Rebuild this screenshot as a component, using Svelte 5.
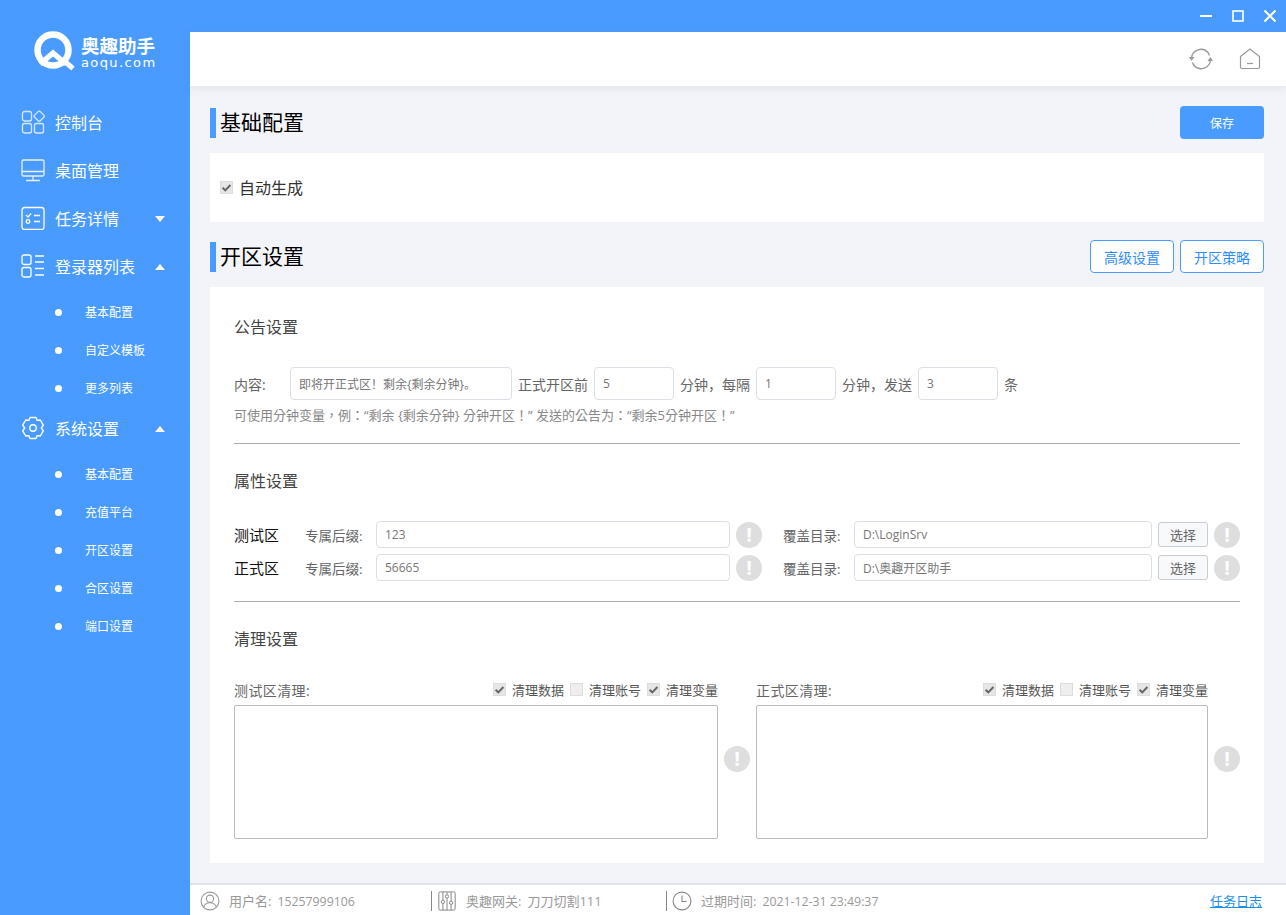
<script>
  const subA = ['基本配置', '自定义模板', '更多列表'];
  const subB = ['基本配置', '充值平台', '开区设置', '合区设置', '端口设置'];
  const attrs = [
    { name: '测试区', suffix: '123', dir: 'D:\\LoginSrv' },
    { name: '正式区', suffix: '56665', dir: 'D:\\奥趣开区助手' }
  ];
  const cleans = [
    { label: '测试区清理:', gap: 'a' },
    { label: '正式区清理:', gap: 'b' }
  ];
</script>

{#snippet warn()}
  <span class="warn">!</span>
{/snippet}

{#snippet check(on, text)}
  <span class="check">
    <span class="box" class:on>
      {#if on}
        <svg viewBox="0 0 14 14"><path d="M2.8 7.2l2.9 2.9 5.5-5.8" fill="none" stroke="#666" stroke-width="2.2"/></svg>
      {/if}
    </span>
    {text}
  </span>
{/snippet}

<div class="app">
  <aside class="side">
    <div class="logo">
      <svg class="logo-mark" viewBox="0 0 42 42">
        <circle cx="20" cy="19" r="15.5" fill="none" stroke="#fff" stroke-width="6.500"/>
        <path d="M7 33L20 22l13 11" fill="none" stroke="#fff" stroke-width="5.500"/>
        <path d="M30 29l10 8.500" stroke="#fff" stroke-width="5"/>
      </svg>
      <div class="logo-text">
        <div class="logo-cn">奥趣助手</div>
        <div class="logo-en">aoqu.com</div>
      </div>
    </div>

    <nav class="nav">
      <div class="item">
        <svg class="ico" viewBox="0 0 24 24"><g fill="none" stroke="#d8e9ff" stroke-width="1.3"><rect x="1.5" y="1.5" width="9" height="9.5" rx="2"/><rect x="14.2" y="2.2" width="8" height="8" rx="1.5" transform="rotate(45 18.2 6.2)"/><rect x="1.5" y="13.5" width="9" height="9.5" rx="2"/><rect x="13.5" y="13.5" width="9" height="9.5" rx="2"/></g></svg>
        <span>控制台</span>
      </div>
      <div class="item">
        <svg class="ico" viewBox="0 0 24 24"><g fill="none" stroke="#e6f1ff" stroke-width="1.3"><rect x="1" y="2" width="22" height="16" rx="1.5"/><path d="M1 13.5h22M12 18v4M5 22.5h14"/></g></svg>
        <span>桌面管理</span>
      </div>
      <div class="item">
        <svg class="ico" viewBox="0 0 24 24"><g fill="none" stroke="#fff" stroke-width="1.3"><rect x="1" y="1.5" width="22" height="22" rx="2.5"/><path d="M5 9l2 2 3-3.5M13 9.5h6M13 15.5h6"/><circle cx="7" cy="15.5" r="1.8"/></g></svg>
        <span>任务详情</span>
        <i class="caret down"></i>
      </div>
      <div class="item">
        <svg class="ico" viewBox="0 0 24 24"><g fill="none" stroke="#fff" stroke-width="1.3"><rect x="1" y="1" width="9" height="9.5" rx="2"/><rect x="1" y="13.5" width="9" height="9.5" rx="2"/><path d="M14 2h9M14 8h9M14 14.5h9M14 21h9"/></g></svg>
        <span>登录器列表</span>
        <i class="caret up"></i>
      </div>
      <div class="subs">
        {#each subA as s}
          <div class="sub"><b></b>{s}</div>
        {/each}
      </div>
      <div class="item">
        <svg class="ico" viewBox="0 0 24 24"><g fill="none" stroke="#fff" stroke-width="1.4"><path d="M9 1.5h6l1.2 2.9 3.100-.4 3 5.100-1.900 2.900 1.900 2.900-3 5.100-3.100-.4L15 22.500H9l-1.200-2.900-3.100.4-3-5.100 1.900-2.900-1.900-2.900 3-5.100 3.100.4z" stroke-linejoin="round"/><circle cx="12" cy="12" r="3.200"/></g></svg>
        <span>系统设置</span>
        <i class="caret up"></i>
      </div>
      <div class="subs">
        {#each subB as s}
          <div class="sub"><b></b>{s}</div>
        {/each}
      </div>
    </nav>
  </aside>

  <div class="main">
    <div class="titlebar">
      <svg viewBox="0 0 14 14"><path d="M1 7h12" stroke="#fff" stroke-width="2"/></svg>
      <svg viewBox="0 0 14 14"><rect x="2" y="2" width="10" height="10" fill="none" stroke="#fff" stroke-width="1.6"/></svg>
      <svg viewBox="0 0 14 14"><path d="M1.500 1.500l11 11M12.500 1.500l-11 11" stroke="#fff" stroke-width="2"/></svg>
    </div>
    <header class="top">
      <svg class="refresh" viewBox="0 0 24 24"><g fill="none" stroke="#9a9a9a" stroke-width="1.400"><path d="M2.500 11a9.500 9.500 0 0 1 16.500-5.500l1.500 3"/><path d="M21.500 13a9.500 9.500 0 0 1-16.500 5.500l-1.500-3"/></g><path d="M0 10l2.600 4 2.900-4zM18.500 14l2.900-4 2.600 4z" fill="#9a9a9a"/></svg>
      <svg class="home" viewBox="0 0 22 22"><path d="M1.500 8.500L11 1l9.500 7.500v10.500a1.500 1.500 0 0 1-1.500 1.500H3a1.500 1.500 0 0 1-1.500-1.500z" fill="none" stroke="#9a9a9a" stroke-width="1.200"/><path d="M8 15.500h6" stroke="#9a9a9a" stroke-width="1.200"/></svg>
    </header>

    <main class="content">
      <div class="head first">
        <h2>基础配置</h2>
        <button class="save">保存</button>
      </div>
      <section class="card auto">
        {@render check(true, '')}
        <span class="auto-label">自动生成</span>
      </section>

      <div class="head">
        <h2>开区设置</h2>
        <div class="head-btns">
          <button class="outline">高级设置</button>
          <button class="outline">开区策略</button>
        </div>
      </div>
      <section class="card form">
        <h3>公告设置</h3>
        <div class="notice">
          <span class="lbl-content">内容:</span>
          <div class="field f-text">即将开正式区！剩余{'{'}剩余分钟{'}'}。</div>
          <span>正式开区前</span>
          <div class="field f-num">5</div>
          <span>分钟，每隔</span>
          <div class="field f-num">1</div>
          <span>分钟，发送</span>
          <div class="field f-num">3</div>
          <span>条</span>
        </div>
        <p class="hint">可使用分钟变量，例：“剩余 {'{'}剩余分钟{'}'} 分钟开区！” 发送的公告为：“剩余5分钟开区！”</p>
        <hr class="rule" />

        <h3>属性设置</h3>
        <div class="attrs">
          {#each attrs as a}
            <div class="attr">
              <span class="zone">{a.name}</span>
              <span class="lbl-suffix">专属后缀:</span>
              <div class="field f-suffix">{a.suffix}</div>
              {@render warn()}
              <span class="lbl-dir">覆盖目录:</span>
              <div class="field f-dir">{a.dir}</div>
              <button class="pick">选择</button>
              {@render warn()}
            </div>
          {/each}
        </div>
        <hr class="rule second" />

        <h3>清理设置</h3>
        <div class="cleans">
          {#each cleans as c}
            <div class="clean">
              <div class="clean-col">
                <div class="clean-head">
                  <span class="clean-label">{c.label}</span>
                  {@render check(true, '清理数据')}
                  {@render check(false, '清理账号')}
                  {@render check(true, '清理变量')}
                </div>
                <div class="area"></div>
              </div>
              {@render warn()}
            </div>
          {/each}
        </div>
      </section>
    </main>

    <footer class="foot">
      <div class="stat s1">
        <svg viewBox="0 0 22 22"><g fill="none" stroke="#999" stroke-width="1.200"><circle cx="11" cy="11" r="9.800"/><circle cx="11" cy="8.500" r="4"/><path d="M4 18c1-3.500 3.500-5 7-5s6 1.500 7 5"/></g></svg>
        <span>用户名:<span class="val">15257999106</span></span>
      </div>
      <div class="stat s2">
        <svg viewBox="0 0 20 22"><g fill="none" stroke="#888" stroke-width="1.100"><rect x="1" y="1" width="18" height="20" rx="1.500"/><path d="M5.500 1v9M5.500 14v7M10 1v3M10 8v13M14.500 1v10M14.500 15v6"/><circle cx="5.500" cy="12" r="1.800"/><circle cx="10" cy="6" r="1.800"/><circle cx="14.500" cy="13" r="1.800"/></g></svg>
        <span>奥趣网关:<span class="val">刀刀切割111</span></span>
      </div>
      <div class="stat s3">
        <svg viewBox="0 0 22 22"><g fill="none" stroke="#888" stroke-width="1.200"><circle cx="11" cy="11" r="9.800"/><path d="M11 5v6.500h5"/></g></svg>
        <span>过期时间:<span class="val">2021-12-31 23:49:37</span></span>
      </div>
      <a class="log" href="#log">任务日志</a>
    </footer>
  </div>
</div>

<style>
  :global(body) {
    margin: 0;
    background: #4a9bff;
  }
  .app {
    display: flex;
    width: 1286px;
    height: 915px;
    overflow: hidden;
    font-family: "Open Sans", "Noto Sans CJK SC", sans-serif;
    font-size: 13px;
    color: #666;
  }
  .side {
    width: 190px;
    flex: none;
    background: #4a9bff;
    color: #fff;
  }
  .logo {
    height: 98px;
    box-sizing: border-box;
    padding: 31px 0 0 33px;
    display: flex;
    gap: 6px;
  }
  .logo-mark {
    width: 42px;
    height: 42px;
    flex: none;
  }
  .logo-text {
    padding-top: 6px;
  }
  .logo-cn {
    font-size: 18.500px;
    font-weight: 700;
    height: 18px;
    line-height: 18px;
    white-space: nowrap;
  }
  .logo-en {
    font-family: "DejaVu Sans", sans-serif;
    font-size: 13px;
    line-height: 13px;
    letter-spacing: 1.400px;
    margin-top: 1px;
  }
  .item {
    height: 48px;
    display: flex;
    align-items: center;
    padding-left: 21px;
    font-size: 16px;
    position: relative;
  }
  .ico {
    width: 24px;
    height: 24px;
    margin-right: 10px;
    flex: none;
  }
  .caret {
    position: absolute;
    left: 155px;
    width: 0;
    height: 0;
    margin-top: 2px;
    border-left: 5px solid transparent;
    border-right: 5px solid transparent;
  }
  .caret.down {
    border-top: 6px solid #fff;
  }
  .caret.up {
    border-bottom: 6px solid #fff;
  }
  .subs {
    margin: 3px 0 -3px;
  }
  .sub {
    height: 38px;
    display: flex;
    align-items: center;
    padding-left: 55px;
    font-size: 12px;
  }
  .sub b {
    width: 7px;
    height: 7px;
    border-radius: 50%;
    background: #fff;
    margin-right: 23px;
  }
  .main {
    flex: 1;
    min-width: 0;
    display: flex;
    flex-direction: column;
  }
  .titlebar {
    height: 32px;
    flex: none;
    background: #4a9bff;
    display: flex;
    justify-content: flex-end;
    align-items: center;
    gap: 18px;
    padding-right: 9px;
  }
  .titlebar svg {
    width: 14px;
    height: 14px;
  }
  .top {
    height: 54px;
    flex: none;
    background: #fff;
    display: flex;
    justify-content: flex-end;
    align-items: center;
    gap: 26px;
    padding-right: 25px;
    box-shadow: 0 2px 8px rgba(120, 130, 160, 0.16);
    position: relative;
    box-sizing: border-box;
  }
  .refresh {
    width: 24px;
    height: 24px;
  }
  .home {
    width: 22px;
    height: 22px;
  }
  .content {
    flex: 1;
    min-height: 0;
    background: #f3f4fa;
    padding: 0 22px 0 20px;
  }
  .head {
    height: 33px;
    margin-top: 18px;
    margin-bottom: 14px;
    display: flex;
    align-items: center;
    justify-content: space-between;
  }
  .head.first {
    margin-top: 20px;
  }
  h2 {
    margin: 0;
    height: 30px;
    line-height: 28px;
    border-left: 6px solid #4a9bff;
    padding-left: 4px;
    font-size: 21px;
    font-weight: 400;
    color: #000;
  }
  button {
    font-family: inherit;
    cursor: pointer;
  }
  .save {
    width: 84px;
    height: 33px;
    border: 0;
    border-radius: 4px;
    background: #4a9bff;
    color: #fff;
    font-size: 12px;
  }
  .head-btns {
    display: flex;
    gap: 6px;
  }
  .outline {
    width: 84px;
    height: 33px;
    border: 1px solid #4a9bff;
    border-radius: 4px;
    background: #fff;
    color: #2f8cff;
    font-size: 14px;
    padding: 0;
  }
  .card {
    background: #fff;
  }
  .auto {
    height: 69px;
    box-sizing: border-box;
    padding-left: 10px;
    display: flex;
    align-items: center;
    font-size: 16px;
    color: #333;
  }
  .auto-label {
    margin: -2px 0 0 6px;
  }
  .auto .check {
    gap: 0;
  }
  .form {
    height: 576px;
    box-sizing: border-box;
    padding: 24px 24px 0;
  }
  h3 {
    margin: 0;
    font-size: 16px;
    font-weight: 400;
    line-height: 32px;
    color: #444;
  }
  .notice {
    margin-top: 24px;
    display: flex;
    align-items: center;
    height: 33px;
    font-size: 14px;
    color: #666;
  }
  .field {
    box-sizing: border-box;
    border: 1px solid #dcdfe6;
    border-radius: 4px;
    display: flex;
    align-items: center;
    padding-left: 8px;
    font-size: 12px;
    color: #777;
    white-space: nowrap;
    background: #fff;
  }
  .lbl-content {
    width: 56px;
  }
  .f-text {
    width: 222px;
    height: 33px;
    margin-right: 6px;
  }
  .f-num {
    width: 80px;
    height: 33px;
    margin: 0 6px;
  }
  .hint {
    margin: 6px 0 0;
    font-family: "Open Sans", "Noto Sans CJK TC", sans-serif;
    font-size: 13px;
    line-height: 18px;
    color: #888;
    white-space: nowrap;
    text-spacing-trim: space-all;
  }
  .rule {
    margin: 19px 0 0;
    border: 0;
    border-top: 1px solid #aaa;
  }
  .rule.second {
    margin-top: 20px;
  }
  .rule + h3 {
    margin-top: 21px;
  }
  .attrs {
    margin-top: 24px;
    display: flex;
    flex-direction: column;
    gap: 6px;
  }
  .attr {
    height: 27px;
    display: flex;
    align-items: center;
    font-size: 14px;
  }
  .zone {
    width: 71px;
    font-size: 15px;
    color: #111;
  }
  .lbl-suffix {
    width: 71px;
    font-size: 13.500px;
  }
  .f-suffix {
    width: 354px;
    height: 27px;
  }
  .lbl-dir {
    width: 71px;
    margin-left: 21px;
    font-size: 13.500px;
  }
  .f-dir {
    width: 298px;
    height: 27px;
  }
  .warn {
    width: 26px;
    height: 26px;
    border-radius: 50%;
    background: #dedede;
    color: #fff;
    font-size: 20px;
    font-weight: 700;
    line-height: 26px;
    text-align: center;
    flex: none;
    margin-left: 6px;
  }
  .pick {
    width: 50px;
    height: 25px;
    margin-left: 6px;
    border: 1px solid #c8ccd4;
    border-radius: 3px;
    background: #f8f9fb;
    color: #666;
    font-size: 13px;
    padding: 0;
  }
  .cleans {
    margin-top: 25px;
    display: flex;
  }
  .clean {
    display: flex;
    align-items: center;
    margin-right: 6px;
  }
  .clean-col {
    width: 484px;
  }
  .clean:last-child .clean-col {
    width: 452px;
  }
  .clean .warn {
    margin-bottom: 2px;
  }
  .clean-head {
    height: 19px;
    margin-bottom: 6px;
    display: flex;
    align-items: center;
    font-size: 13px;
    gap: 6px;
  }
  .clean-label {
    margin-right: auto;
    font-size: 14px;
    letter-spacing: 0.400px;
  }
  .check {
    display: inline-flex;
    align-items: center;
    gap: 6px;
    color: #555;
  }
  .box {
    width: 13px;
    height: 13px;
    display: block;
    background: #eee;
    border: 1px solid #ddd;
    box-sizing: border-box;
    position: relative;
  }
  .box.on {
    background: #e6e6e6;
  }
  .box svg {
    position: absolute;
    left: -1px;
    top: -1px;
    width: 13px;
    height: 13px;
  }
  .area {
    height: 134px;
    box-sizing: border-box;
    border: 1px solid #bbb;
    border-radius: 2px;
  }
  .foot {
    height: 32px;
    flex: none;
    box-sizing: border-box;
    border-top: 2px solid #e2e3e8;
    background: #fff;
    display: flex;
    align-items: center;
    padding: 1px 24px 0 10px;
    font-size: 13px;
    color: #999;
  }
  .stat {
    display: flex;
    align-items: center;
    height: 20px;
  }
  .stat svg {
    width: 20px;
    height: 20px;
    margin-right: 9px;
  }
  .val {
    margin-left: 6px;
    font-size: 12.300px;
  }
  .s2 .val {
    font-size: 13px;
  }
  .s1 {
    width: 231px;
  }
  .s2,
  .s3 {
    border-left: 1px solid #888;
    padding-left: 5px;
  }
  .s2 {
    width: 229px;
  }
  .log {
    margin-left: auto;
    color: #1a8fe8;
    font-size: 13px;
  }
</style>
